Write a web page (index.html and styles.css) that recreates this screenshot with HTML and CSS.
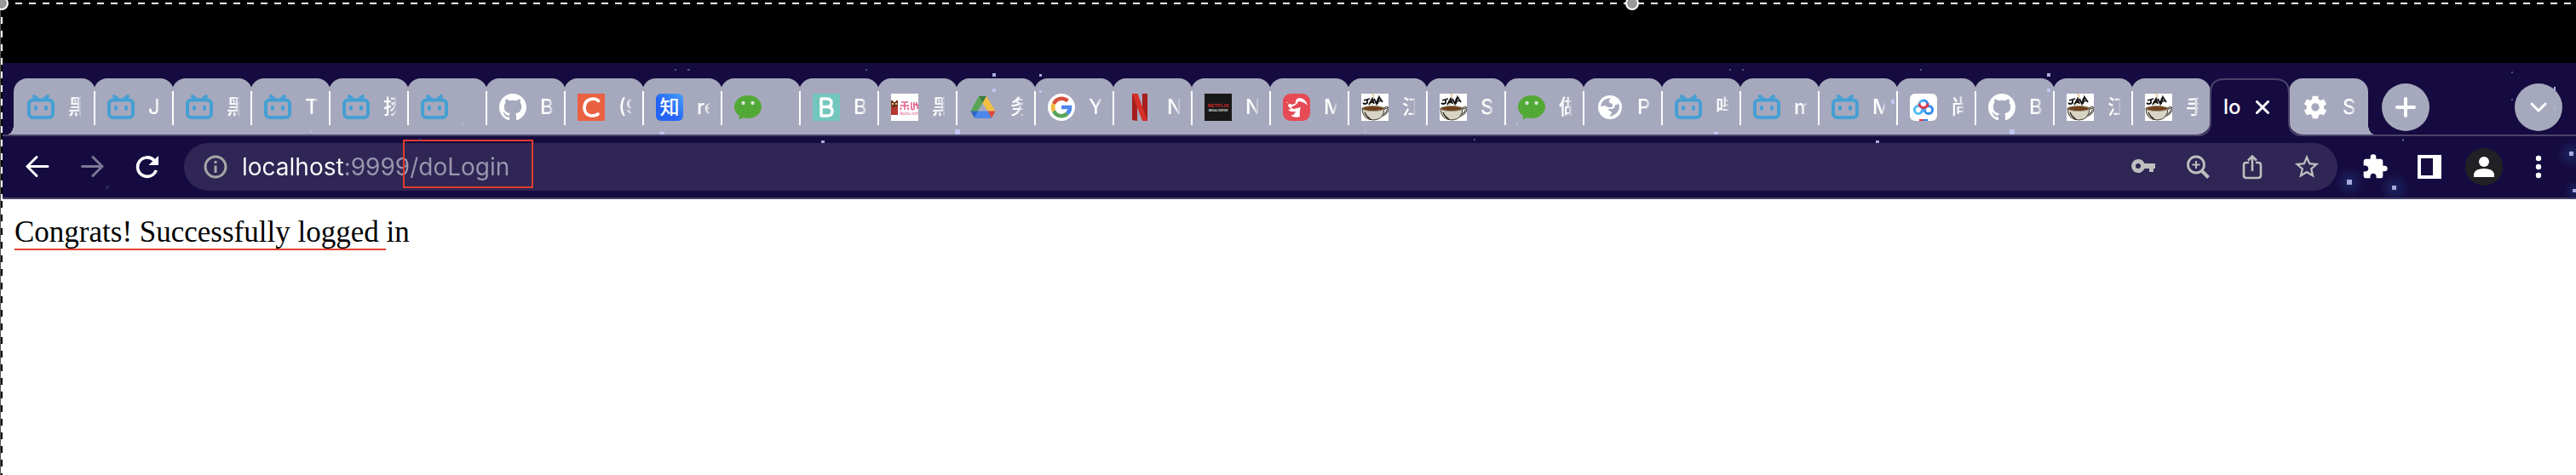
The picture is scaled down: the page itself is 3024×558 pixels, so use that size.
FILE: index.html
```html
<!DOCTYPE html>
<html lang="en">
<head>
<meta charset="utf-8">
<title>localhost:9999/doLogin</title>
<link rel="stylesheet" href="styles.css">
</head>
<body>
<svg class="defs" aria-hidden="true">
  <defs>
    <linearGradient id="zh" x1="1" y1="0" x2="0" y2="1"><stop offset="0" stop-color="#45a2fb"/><stop offset=".6" stop-color="#2463f6"/></linearGradient>
    <linearGradient id="pan" x1="0" x2="1"><stop offset="0" stop-color="#4fc0f5"/><stop offset="1" stop-color="#2f7df0"/></linearGradient>
  </defs>
  <symbol id="bili" viewBox="0 0 32 32"><g fill="none" stroke="#459fd3" stroke-width="4" stroke-linecap="round"><rect x="2" y="7.500" width="28" height="20.500" rx="4.500"/><path d="M8 3l4 3.500M24 3l-4 3.500"/></g><rect x="8" y="14" width="4" height="6" rx="1.800" fill="#459fd3"/><rect x="20" y="14" width="4" height="6" rx="1.800" fill="#459fd3"/></symbol>
  <symbol id="github" viewBox="0 0 16 16"><path fill="#fff" d="M8 0C3.580 0 0 3.580 0 8c0 3.540 2.290 6.530 5.470 7.590.4.070.55-.17.55-.38 0-.19-.01-.82-.01-1.490-2.010.37-2.530-.49-2.690-.94-.09-.23-.48-.94-.82-1.130-.28-.15-.68-.52-.01-.53.63-.01 1.080.58 1.230.82.72 1.210 1.870.87 2.330.66.07-.52.28-.87.51-1.070-1.780-.2-3.640-.89-3.640-3.950 0-.87.31-1.590.82-2.150-.08-.2-.36-1.020.08-2.120 0 0 .67-.21 2.200.82.64-.18 1.320-.27 2-.27s1.360.09 2 .27c1.530-1.040 2.200-.82 2.200-.82.44 1.100.16 1.920.08 2.120.51.56.82 1.270.82 2.150 0 3.070-1.870 3.750-3.650 3.950.29.25.54.73.54 1.480 0 1.070-.01 1.930-.01 2.200 0 .21.15.46.55.38A8.010 8.010 0 0 0 16 8c0-4.420-3.580-8-8-8z"/></symbol>
  <symbol id="csdn" viewBox="0 0 32 32"><path fill="#ea6142" d="M0 0h32v32H0z"/><path fill="none" stroke="#fff" stroke-width="3.600" stroke-linecap="round" d="M24.500 8.500Q22 6 18 6 8 7 8 17 8.500 25.500 16.500 26 21.500 26 24 24"/></symbol>
  <symbol id="zhihu" viewBox="0 0 32 32"><rect width="32" height="32" rx="6" fill="url(#zh)"/><text x="16" y="24" class="glyph-zh">知</text></symbol>
  <symbol id="wechat" viewBox="0 0 32 32"><path fill="#53a936" d="M16 2c9 0 16 6 16 13.500S25 29 16 29c-2 0-4-.3-5.500-.8L5.500 30.500 6 26C2.500 23.500 0 20 0 15.500 0 8 7 2 16 2z"/><circle cx="10.500" cy="11" r="2.200" fill="#d5e4d3"/><circle cx="21.500" cy="11" r="2.200" fill="#d5e4d3"/></symbol>
  <symbol id="boot" viewBox="0 0 32 32"><path fill="#73c6be" d="M0 0h32v32H0z"/><path fill="none" stroke="#fff" stroke-width="3.400" stroke-linejoin="round" d="M10 6h6.500q5.500 0 5.500 4.800t-5.500 4.700H10h7q6 0 6 5.300T17 26h-7z"/></symbol>
  <symbol id="leyou" viewBox="0 0 32 32"><path fill="#fff" d="M0 0h32v32H0z"/><path fill="#b43733" d="M0 14h8v11H0z"/><path fill="#6b3518" d="M0 8h2l1 2h2l1-2h2v6l-2 2H2l-2-2z"/><path fill="#f0c9a0" d="M1 11h2v2H1zm4 0h2v2H5z"/><path fill="none" stroke="#df5c8b" stroke-width="1.500" d="M12 10h8M11 14h10M16 11v8M12 16l-1 3M19 16l2 3M24 10v7q0 2 2 2M27 10v9M26 13h5v5M30 10v4"/><text x="10" y="25" class="glyph-leyou">leyou.com</text></symbol>
  <symbol id="drive" viewBox="0 0 32 32"><path fill="#5aa657" d="M11 3L1.500 20.500l4 7.500L15.500 11z"/><path fill="#387d3d" d="M11 3h9l-4.500 8z"/><path fill="#f3bf42" d="M20 3l10.500 17.500h-9L15.500 11z"/><path fill="#3366cc" d="M1.500 20.500h9L6 28.500z"/><path fill="#4e87ec" d="M10.500 20.500h11l4.500 8.500H6z"/><path fill="#d9493a" d="M21.500 20.500h9L26 28.500z"/></symbol>
  <symbol id="google" viewBox="0 0 32 32"><circle cx="16" cy="16" r="16" fill="#fff"/><g fill="none" stroke-width="4.600"><path stroke="#d8503f" d="M23.300 8.700A10 10 0 0 0 7 12"/><path stroke="#f2bb41" d="M7 12a10 10 0 0 0 0 8.500"/><path stroke="#57a55c" d="M7 20.500a10 10 0 0 0 15.800 3"/><path stroke="#4f86ec" d="M22.800 23.500A10 10 0 0 0 26 16H16"/></g></symbol>
  <symbol id="netflix" viewBox="0 0 32 32"><path fill="#a51f1b" d="M7 0h6v32l-6-1zM19 0h6v32l-6-1z"/><path fill="#d52f27" d="M7 0h6.500L25 32h-6z"/></symbol>
  <symbol id="nmc" viewBox="0 0 32 32"><path fill="#181818" d="M0 0h32v32H0z"/><text x="16" y="16" class="glyph-nf">NETFLIX</text><text x="16" y="21" class="glyph-mc">MEDIA CENTER</text></symbol>
  <symbol id="red" viewBox="0 0 32 32"><rect width="32" height="32" rx="9" fill="#e64a54"/><path fill="#fff" d="M4 10q7 5 11 1Q14 6 20 5q7 1 9 9-5-5-11-5-1 4-7 6-3 2 2 3l4-1 4-1q-2 5-1 11-5 2-11-1 5-1 6-5-6 1-9-2l4-1q-4-2-4-5l2-1q-3-1-2-2z"/></symbol>
  <symbol id="java" viewBox="0 0 32 32"><path fill="#fff" d="M0 0h32v32H0z"/><path fill="none" stroke="#e7c99b" stroke-width="1.600" d="M12 0q5 2 1 6t0 7"/><path fill="none" stroke="#151515" stroke-width="1.800" d="M3 8l7-2M7 7v4q-3 2-5 0M9 13l4-7 2 6M10 10h5M15 6l3 6 2-7M19 12l2-8 4 6M20 9l4-1"/><path fill="none" stroke="#27231c" stroke-width="2.400" d="M26 18q6-4 5 1t-8 7"/><path fill="none" stroke="#e0dccd" stroke-width="1" d="M26 18q6-4 5 1t-8 7"/><path fill="#d8d4c4" stroke="#403a30" d="M1 17q0 14 14 14 12-1 12-14z"/><ellipse cx="14" cy="17.500" rx="13" ry="3" fill="#70401a" stroke="#a09a88"/><path fill="none" stroke="#27231c" stroke-width="1.300" d="M4 22q2 5 7 8"/></symbol>
  <symbol id="globe" viewBox="0 0 32 32"><circle cx="16" cy="16" r="14" fill="#fff"/><path fill="#a6a8bd" d="M5 15Q6 6 17 5q-4 4-1 6 5 1 2 5h-5q-1-3-8-1zM26 11q4 11-10 16 0-3 2-4 0-3-4-3 0-3 5-2 3-1 3-5 3 1 4-2z"/></symbol>
  <symbol id="baidu" viewBox="0 0 32 32"><rect width="32" height="32" rx="6" fill="#fff"/><g fill="none" stroke-width="3"><circle cx="10" cy="19" r="4.600" stroke="#4fc0f5"/><circle cx="22" cy="19" r="4.600" stroke="#2f8bf2"/><path stroke="#4aa8f0" d="M13 22l6-6"/><path stroke="url(#pan)" d="M11 13a5 5 0 0 1 10 0"/><path stroke="#e5374d" d="M11 11.500a5 5 0 0 0 10 0"/></g><path fill="#e5374d" d="M11 30h5v2h-5z"/><path fill="#2f7df0" d="M16 30h5v2h-5z"/></symbol>
  <symbol id="gear" viewBox="0 0 24 24"><path fill="#fff" d="M19.430 12.980c.04-.32.07-.64.07-.98s-.03-.66-.07-.98l2.110-1.650c.19-.15.24-.42.12-.64l-2-3.460c-.12-.22-.39-.3-.61-.22l-2.490 1c-.52-.4-1.080-.73-1.690-.98l-.38-2.650C14.460 2.180 14.250 2 14 2h-4c-.25 0-.46.18-.49.42l-.38 2.650c-.61.25-1.170.59-1.690.98l-2.490-1c-.23-.09-.49 0-.61.22l-2 3.460c-.13.22-.07.49.12.64l2.110 1.650c-.04.32-.07.65-.07.98s.03.66.07.98l-2.110 1.650c-.19.15-.24.42-.12.64l2 3.460c.12.22.39.3.61.22l2.490-1c.52.4 1.080.73 1.690.98l.38 2.650c.03.24.24.42.49.42h4c.25 0 .46-.18.49-.42l.38-2.650c.61-.25 1.170-.59 1.690-.98l2.490 1c.23.09.49 0 .61-.22l2-3.460c.12-.22.07-.49-.12-.64l-2.110-1.650zM12 15.500c-1.930 0-3.500-1.570-3.500-3.500s1.570-3.500 3.500-3.500 3.500 1.570 3.500 3.500-1.570 3.500-3.500 3.500z"/></symbol>
</svg>

<div class="letterbox"></div>

<header class="browser">
  <nav class="tabstrip" aria-label="Tabs">
    <button class="tab first"><svg class="fav"><use href="#bili"/></svg><span class="title">黑</span></button>
    <button class="tab"><svg class="fav"><use href="#bili"/></svg><span class="title">J</span></button>
    <button class="tab"><svg class="fav"><use href="#bili"/></svg><span class="title">黑</span></button>
    <button class="tab"><svg class="fav"><use href="#bili"/></svg><span class="title">T</span></button>
    <button class="tab"><svg class="fav"><use href="#bili"/></svg><span class="title">扬</span></button>
    <button class="tab" aria-label="Bilibili"><svg class="fav"><use href="#bili"/></svg></button>
    <button class="tab"><svg class="fav"><use href="#github"/></svg><span class="title">B</span></button>
    <button class="tab"><svg class="fav"><use href="#csdn"/></svg><span class="title">(9</span></button>
    <button class="tab"><svg class="fav"><use href="#zhihu"/></svg><span class="title">re</span></button>
    <button class="tab" aria-label="WeChat"><svg class="fav"><use href="#wechat"/></svg></button>
    <button class="tab"><svg class="fav"><use href="#boot"/></svg><span class="title">B</span></button>
    <button class="tab"><svg class="fav"><use href="#leyou"/></svg><span class="title">黑</span></button>
    <button class="tab"><svg class="fav"><use href="#drive"/></svg><span class="title">务</span></button>
    <button class="tab"><svg class="fav"><use href="#google"/></svg><span class="title">Y</span></button>
    <button class="tab"><svg class="fav"><use href="#netflix"/></svg><span class="title">N</span></button>
    <button class="tab"><svg class="fav"><use href="#nmc"/></svg><span class="title">N</span></button>
    <button class="tab"><svg class="fav"><use href="#red"/></svg><span class="title">M</span></button>
    <button class="tab"><svg class="fav"><use href="#java"/></svg><span class="title">江</span></button>
    <button class="tab"><svg class="fav"><use href="#java"/></svg><span class="title">S</span></button>
    <button class="tab"><svg class="fav"><use href="#wechat"/></svg><span class="title">做</span></button>
    <button class="tab"><svg class="fav"><use href="#globe"/></svg><span class="title">P</span></button>
    <button class="tab"><svg class="fav"><use href="#bili"/></svg><span class="title">哔</span></button>
    <button class="tab"><svg class="fav"><use href="#bili"/></svg><span class="title">m</span></button>
    <button class="tab"><svg class="fav"><use href="#bili"/></svg><span class="title">M</span></button>
    <button class="tab"><svg class="fav"><use href="#baidu"/></svg><span class="title">尚</span></button>
    <button class="tab"><svg class="fav"><use href="#github"/></svg><span class="title">B</span></button>
    <button class="tab"><svg class="fav"><use href="#java"/></svg><span class="title">江</span></button>
    <button class="tab before-active"><svg class="fav"><use href="#java"/></svg><span class="title">手</span></button>
    <div class="active-tab">
      <svg class="outline" viewBox="0 0 124 68"><path fill="#150b40" d="M0 68Q16 68 16 51V17Q16 1 32 1H92Q108 1 108 17V51Q108 68 124 68z"/><path fill="none" stroke="#4b4369" stroke-width="2" d="M0 67Q16 67 16 51V17Q16 1 32 1H92Q108 1 108 17V51Q108 67 124 67"/></svg>
      <span class="active-title">lo</span>
      <button class="close" aria-label="Close tab"><svg width="16" height="16" viewBox="0 0 16 16"><path fill="none" stroke="#fff" stroke-width="3" stroke-linecap="round" d="M1.500 1.500l13 13M14.500 1.500l-13 13"/></svg></button>
    </div>
    <button class="tab last"><svg class="fav"><use href="#gear"/></svg><span class="title">S</span></button>
    <button class="round" aria-label="New tab"><svg width="24" height="24" viewBox="0 0 24 24"><path fill="none" stroke="#fff" stroke-width="4" stroke-linecap="round" d="M12 2v20M2 12h20"/></svg></button>
    <button class="round search" aria-label="Search tabs"><svg width="20" height="12" viewBox="0 0 20 12"><path fill="none" stroke="#fff" stroke-width="3" stroke-linecap="round" stroke-linejoin="round" d="M2 2l8 8 8-8"/></svg></button>
  </nav>

  <div class="toolbar">
    <button class="tool" aria-label="Back"><svg width="28" height="28" viewBox="0 0 28 28"><path fill="none" stroke="#fff" stroke-width="3" stroke-linecap="round" d="M2.500 13.500H26M13 2.500l-11 11 11 11"/></svg></button>
    <button class="tool" aria-label="Forward"><svg width="28" height="28" viewBox="0 0 28 28"><path fill="none" stroke="#7d7797" stroke-width="3" stroke-linecap="round" d="M2.500 13.500H26M15 2.500l11 11-11 11"/></svg></button>
    <button class="tool" aria-label="Reload"><svg width="28" height="28" viewBox="0 0 28 28"><path fill="none" stroke="#fff" stroke-width="3.600" d="M23 6.500A11.200 11.200 0 1 0 25.300 18"/><path fill="#fff" d="M28 1v11H16.500z"/></svg></button>
    <div class="omnibox">
      <button class="info" aria-label="Site information"><svg width="28" height="28" viewBox="0 0 28 28"><circle cx="14" cy="14" r="12" fill="none" stroke="#a3a7a5" stroke-width="3"/><path fill="#a3a7a5" d="M12.500 7h3v3h-3zM12.500 12.500h3V21h-3z"/></svg></button>
      <input class="url" type="text" value="localhost:9999/doLogin" aria-label="Address" spellcheck="false">
      <button class="tool" aria-label="Passwords"><svg width="28" height="28" viewBox="0 0 28 28"><path fill="#bebebe" fill-rule="evenodd" d="M8 5a8 8 0 0 1 7.500 5H28v6h-2v4h-5v-4h-5.500A8 8 0 1 1 8 5zm0 5a3 3 0 1 0 0 6 3 3 0 0 0 0-6z"/></svg></button>
      <button class="tool" aria-label="Zoom"><svg width="28" height="28" viewBox="0 0 28 28"><g fill="none" stroke="#bebebe"><circle cx="12" cy="11.500" r="9.500" stroke-width="2.800"/><path stroke-width="4" d="M18.500 18.500l8 8"/><path stroke-width="2" d="M12 7v9M7.500 11.500h9"/></g></svg></button>
      <button class="tool" aria-label="Share"><svg width="24" height="30" viewBox="0 0 24 30"><path fill="none" stroke="#bebebe" stroke-width="2.600" d="M8 10H5q-3 0-3 3v12q0 3 3 3h14q3 0 3-3V13q0-3-3-3h-3M12 20V3M7 7.500l5-5 5 5"/></svg></button>
      <button class="tool" aria-label="Bookmark"><svg width="34" height="34" viewBox="0 0 24 24"><path fill="#bebebe" d="M22 9.240l-7.190-.62L12 2 9.190 8.630 2 9.240l5.460 4.730L5.820 21 12 17.270 18.180 21l-1.630-7.030L22 9.240zM12 15.400l-3.760 2.270 1-4.280-3.320-2.880 4.380-.38L12 6.100l1.710 4.040 4.380.38-3.320 2.880 1 4.280L12 15.400z"/></svg></button>
      <span class="mark-box"></span>
    </div>
    <button class="tool" aria-label="Extensions"><svg width="32" height="32" viewBox="0 0 24 24"><path fill="#fff" d="M20.500 11H19V7c0-1.100-.9-2-2-2h-4V3.500a2.500 2.500 0 0 0-5 0V5H4c-1.100 0-1.990.9-1.990 2v3.800H3.500c1.490 0 2.700 1.210 2.700 2.700s-1.210 2.700-2.700 2.700H2V20c0 1.100.9 2 2 2h3.800v-1.500c0-1.490 1.210-2.700 2.700-2.700s2.700 1.210 2.700 2.700V22H17c1.100 0 2-.9 2-2v-4h1.500a2.500 2.500 0 0 0 0-5z"/></svg></button>
    <button class="tool" aria-label="Side panel"><svg width="28" height="28" viewBox="0 0 28 28"><path fill="#fff" fill-rule="evenodd" d="M0 0h28v28H0zM4 4v20h14V4z"/></svg></button>
    <button class="tool" aria-label="Profile"><svg width="44" height="44" viewBox="0 0 44 44"><circle cx="22" cy="22" r="22" fill="#212125"/><circle cx="22" cy="16" r="6" fill="#fff"/><path fill="#fff" d="M10 34v-4q2-6 12-6t12 6v4z"/></svg></button>
    <button class="tool" aria-label="Menu"><svg width="8" height="28" viewBox="0 0 8 28"><g fill="#fff"><circle cx="4" cy="4" r="3.200"/><circle cx="4" cy="14" r="3.200"/><circle cx="4" cy="24" r="3.200"/></g></svg></button>
  </div>

  <svg class="stars" aria-hidden="true">
    <defs><radialGradient id="glow"><stop offset="0" stop-color="#24428a" stop-opacity=".45"/><stop offset="1" stop-color="#24428a" stop-opacity="0"/></radialGradient></defs>
    <g fill="url(#glow)"><circle cx="2758" cy="140" r="18"/><circle cx="2811" cy="147" r="18"/><circle cx="3019" cy="107" r="18"/><circle cx="3022" cy="150" r="12"/></g>
    <g fill="#a9a9dc"><path d="M2755 137h6v6h-6zM2808 144h5v5h-5zM3016 104h5v5h-5zM3020 148h4v4h-4zM1165 12h4v4h-4zM1220 13h3v3h-3zM2403 12h4v4h-4zM964 91h4v3h-4zM2202 91h4v3h-4z"/></g>
    <g fill="#c2c5f3"><path d="M1121 78h6v6h-6zM1165 30h4v4h-4zM1220 32h3v3h-3zM774 81h6v3h-6zM2012 81h5v3h-5zM2220 43h4v5h-4zM2359 78h6v6h-6zM2403 30h4v4h-4z"/></g>
    <g fill="#54508a"><path d="M792 7h2v2h-2zM807 7h3v2h-3zM1016 7h2v2h-2zM2030 7h2v2h-2zM2045 7h2v2h-2zM2254 7h2v2h-2zM2948 10h2v2h-2zM2948 42h2v2h-2zM492 89h2v2h-2zM1730 89h2v2h-2zM2820 89h2v3h-2z"/></g>
    <path fill="#2c2358" d="M124 144h4v4h-4z"/>
    <g fill="#b3b3d8"><path d="M364 78h2v4h-2zM542 70h2v4h-2zM1602 78h2v4h-2zM1780 70h2v4h-2zM2998 28h2v4h-2zM2998 50h2v4h-2z"/></g>
  </svg>
</header>

<main class="page"><p class="message"><span class="marked">Congrats! Successfully logged </span>in</p></main>

<div class="select-top"></div>
<div class="select-left"></div>
<span class="handle corner"></span>
<span class="handle middle"></span>
</body>
</html>
```
FILE: styles.css
```css
* { box-sizing: border-box; }
body {
  margin: 0;
  position: relative;
  min-height: 100vh;
  overflow-x: hidden;
  background: #fff;
  font-family: Inter, "Noto Sans CJK SC", sans-serif;
}
button {
  margin: 0;
  padding: 0;
  border: 0;
  background: none;
  font: inherit;
  color: inherit;
}
svg { display: block; flex: none; }
.defs { position: absolute; width: 0; height: 0; }

.letterbox { height: 74px; background: #000; }
.browser { position: relative; background: #150b40; }

.tabstrip {
  display: flex;
  align-items: flex-start;
  height: 86px;
  padding: 18px 16px 0 8px;
  border-bottom: 2px solid #4b4369;
}
.tab {
  position: relative;
  z-index: 0;
  flex: 0 1 92px;
  min-width: 0;
  height: 66px;
  padding: 2px 0 0 15px;
  display: flex;
  align-items: center;
  gap: 16px;
  color: #fff;
}
.tab::before {
  content: "";
  position: absolute;
  z-index: -1;
  inset: 0 -1px;
  border-radius: 16px 16px 0 0;
  background: #a6a8bd;
}
.tab + .tab::after {
  content: "";
  position: absolute;
  left: -1px;
  top: 15px;
  width: 2px;
  height: 40px;
  background: #fff;
}
.tab.first {
  flex-basis: 103px;
  padding-left: 24px;
  background: radial-gradient(ellipse 8px 12px at 0 0, transparent 98%, #a6a8bd 100%) 0 100% / 8px 12px no-repeat;
}
.tab.first::before { left: 8px; }
.tab.before-active::before { right: 0; border-bottom-right-radius: 16px; }
.tab.last { flex-basis: 93px; }
.tab.last::before { left: 0; right: 0; border-bottom-left-radius: 16px; }
.tab.last::after {
  content: "";
  position: absolute;
  right: -8px;
  bottom: 0;
  width: 8px;
  height: 12px;
  background: radial-gradient(ellipse 8px 12px at 100% 0, transparent 98%, #a6a8bd 100%);
}
.fav { width: 32px; height: 32px; }
.title {
  width: 15px;
  overflow: hidden;
  white-space: nowrap;
  text-align: left;
  font-size: 24px;
  font-weight: 500;
  line-height: 32px;
  -webkit-mask-image: linear-gradient(90deg, #000 60%, rgba(0, 0, 0, .3));
  mask-image: linear-gradient(90deg, #000 60%, rgba(0, 0, 0, .3));
}

.active-tab {
  position: relative;
  z-index: 1;
  flex: 0 1 92px;
  height: 66px;
  padding: 2px 0 0 15px;
  display: flex;
  align-items: center;
  gap: 17px;
  color: #fff;
}
.outline { position: absolute; left: -16px; top: 0; width: 124px; height: 68px; }
.active-title { position: relative; width: 21px; overflow: hidden; font-size: 24px; font-weight: 500; line-height: 32px; }
.close { position: relative; }

.round {
  flex: none;
  width: 56px;
  height: 56px;
  margin: 6px 0 0 16px;
  border-radius: 50%;
  background: #a6a8bd;
  display: grid;
  place-items: center;
}
.round.search { margin-left: auto; }

.toolbar {
  display: flex;
  align-items: center;
  height: 74px;
  padding: 0 12px;
  border-bottom: 2px solid #4b4369;
}
.tool {
  flex: none;
  width: 64px;
  height: 56px;
  display: grid;
  place-items: center;
}
.omnibox {
  position: relative;
  flex: 1;
  min-width: 0;
  height: 56px;
  margin: 0 12px;
  padding: 0 4px 0 8px;
  border-radius: 28px;
  background: #2f2655;
  display: flex;
  align-items: center;
}
.info { width: 58px; height: 56px; display: grid; place-items: center; }
.url {
  flex: 1;
  min-width: 0;
  height: 56px;
  margin: 0;
  padding: 0 0 0 2px;
  border: 0;
  outline: 0;
  font: 28px Inter, sans-serif;
  color: transparent;
  background: linear-gradient(90deg, #fff 121px, #9b96af 121px);
  -webkit-background-clip: text;
  background-clip: text;
}
.mark-box {
  position: absolute;
  left: 257px;
  top: -4px;
  width: 153px;
  height: 57px;
  border: 2px solid #e03d2d;
  pointer-events: none;
}
.stars { position: absolute; inset: 0; width: 100%; height: 100%; z-index: 2; pointer-events: none; }

.glyph-zh { font: 500 23px "Noto Sans CJK SC", sans-serif; fill: #fff; text-anchor: middle; }
.glyph-leyou { font: 5px Inter, sans-serif; fill: #df5c8b; }
.glyph-nf { font: 700 6px "Liberation Sans", sans-serif; fill: #d52a2a; text-anchor: middle; }
.glyph-mc { font: 700 3px "Liberation Sans", sans-serif; fill: #ddd; text-anchor: middle; }

.page { padding: 17px; }
.message {
  margin: 0;
  font: 35px/43px "Liberation Serif", "Times New Roman", serif;
  color: #000;
}
.marked { display: inline-block; height: 43px; border-bottom: 2px solid #e5402c; white-space: pre; }

.select-top {
  position: absolute;
  z-index: 3;
  left: 2px;
  right: 0;
  top: 3px;
  height: 2px;
  background: repeating-linear-gradient(90deg, #fff 0 8px, #000 8px 16px);
}
.select-left {
  position: absolute;
  z-index: 3;
  left: 0;
  top: 4px;
  bottom: 0;
  width: 3px;
  border-left: 1px solid #555;
  background: repeating-linear-gradient(#fff 0 8px, #000 8px 16px);
}
.handle {
  position: absolute;
  z-index: 4;
  top: -4px;
  width: 16px;
  height: 16px;
  border: 2px solid #fff;
  border-radius: 50%;
  background: #999;
}
.handle.corner { left: -6px; }
.handle.middle { left: 1908px; }
```
